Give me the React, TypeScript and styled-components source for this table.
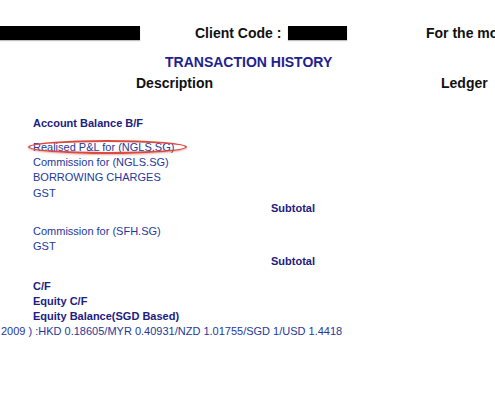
import styled, { createGlobalStyle } from 'styled-components'

const GlobalStyle = createGlobalStyle`
  html, body {
    margin: 0;
    padding: 0;
    background: #ffffff;
    overflow: hidden;
  }
  body {
    font-family: "Liberation Sans", Arial, sans-serif;
  }
`

type Line = {
  text: string
  bold?: boolean
  subtotal?: boolean
  gap?: number
  circled?: boolean
}

const lines: Line[] = [
  { text: 'Account Balance B/F', bold: true },
  { text: 'Realised P&L for (NGLS.SG)', gap: 9, circled: true },
  { text: 'Commission for (NGLS.SG)' },
  { text: 'BORROWING CHARGES' },
  { text: 'GST' },
  { text: 'Subtotal', bold: true, subtotal: true },
  { text: 'Commission for (SFH.SG)', gap: 7.3 },
  { text: 'GST' },
  { text: 'Subtotal', bold: true, subtotal: true },
  { text: 'C/F', bold: true, gap: 9 },
  { text: 'Equity C/F', bold: true },
  { text: 'Equity Balance(SGD Based)', bold: true }
]

export default function App (): JSX.Element {
  return <Page>
    <GlobalStyle />
    <HeaderRow>
      <Redaction $width={140} $gapAfter={55} />
      <HeaderLabel $width={93}>Client Code :</HeaderLabel>
      <Redaction $width={59} $gapAfter={79} />
      <HeaderLabel>For the month of December 2009</HeaderLabel>
    </HeaderRow>
    <Title>TRANSACTION HISTORY</Title>
    <ColumnHeaders>
      <HeaderLabel>Description</HeaderLabel>
      <HeaderLabel>Ledger</HeaderLabel>
    </ColumnHeaders>
    <Entries>
      {lines.map((line, i) =>
        <Entry key={i} $bold={line.bold} $subtotal={line.subtotal} $gap={line.gap ?? 0}>
          {line.text}
          {line.circled && <Circle />}
        </Entry>)}
      <RateLine>2009 ) :HKD 0.18605/MYR 0.40931/NZD 1.01755/SGD 1/USD 1.4418</RateLine>
    </Entries>
  </Page>
}

const Page = styled.div`
  width: 495px;
  height: 400px;
  overflow: hidden;
  white-space: nowrap;
`

const HeaderRow = styled.div`
  display: flex;
  align-items: center;
  height: 16px;
  margin-top: 25px;
`

const Redaction = styled.div<{ $width: number, $gapAfter: number }>`
  flex: none;
  width: ${p => p.$width}px;
  height: 14px;
  margin-right: ${p => p.$gapAfter}px;
  background: #000;
  box-shadow: 0 1px 1px rgba(0, 0, 0, 0.25);
`

const HeaderLabel = styled.span<{ $width?: number }>`
  flex: none;
  ${p => p.$width ? `width: ${p.$width}px;` : ''}
  font-size: 14px;
  font-weight: bold;
  line-height: 16px;
  color: #111;
`

const Title = styled.div`
  margin: 13px 0 0 165px;
  font-size: 14px;
  font-weight: bold;
  line-height: 16px;
  color: #1e2190;
`

const ColumnHeaders = styled.div`
  display: grid;
  grid-template-columns: 305px auto;
  margin-top: 5px;
  padding-left: 136px;
`

const Entries = styled.div`
  display: flex;
  flex-direction: column;
  margin-top: 24.6px;
  padding-left: 33px;
`

const Entry = styled.div<{ $bold?: boolean, $subtotal?: boolean, $gap: number }>`
  position: relative;
  align-self: flex-start;
  margin-top: ${p => p.$gap}px;
  margin-left: ${p => p.$subtotal ? 238 : 0}px;
  font-size: 11px;
  line-height: 15.3px;
  font-weight: ${p => p.$bold ? 'bold' : 'normal'};
  color: ${p => p.$bold ? '#1c207f' : '#24389c'};
`

const Circle = styled.span`
  position: absolute;
  left: -5px;
  top: 0.5px;
  width: 155px;
  height: 10px;
  border: 2px solid #dd4a3c;
  border-radius: 50%;
  box-shadow: 0 1px 2px rgba(150, 40, 30, 0.35);
`

const RateLine = styled.div`
  margin-left: -32px;
  font-size: 11px;
  line-height: 15.3px;
  color: #24389c;
`
